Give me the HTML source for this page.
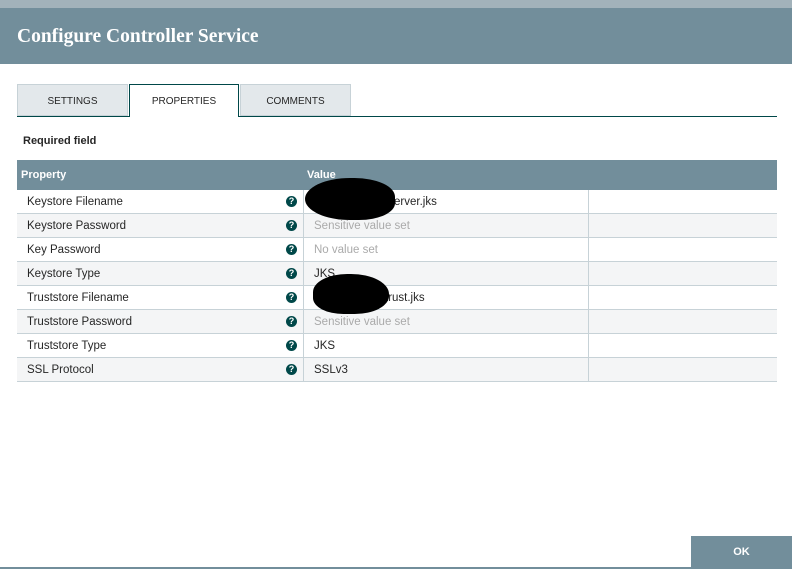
<!DOCTYPE html>
<html><head><style>
*{margin:0;padding:0;box-sizing:border-box}
body{width:792px;height:569px;background:#fff;position:relative;overflow:hidden;font-family:"Liberation Sans",sans-serif}
.top{position:absolute;left:0;top:0;width:792px;height:8px;background:#a2b2ba}
.hdr{position:absolute;left:0;top:8px;width:792px;height:56px;background:#728e9b;color:#fff;font-family:"Liberation Serif",serif;font-weight:bold;font-size:19.5px;padding:18px 0 0 17px}
.tab{position:absolute;top:84px;height:32px;border:1px solid #c7d2d7;background:#e3e8eb;font-size:10px;color:#262626;text-align:center;line-height:33px}
.tabline{position:absolute;left:17px;top:116px;width:760px;height:1px;background:#004849}
.req{position:absolute;left:23px;top:135px;font-size:11px;font-weight:bold;color:#262626}
.th{position:absolute;left:17px;top:160px;width:760px;height:30px;background:#728e9b;color:#fff;font-weight:bold;font-size:11px}
.row{position:absolute;left:17px;width:760px;height:24px;border-bottom:1px solid #c7d2d7;font-size:11.5px;color:#262626}
.c1{position:absolute;left:10px;top:6px}
.q{position:absolute;left:269px;top:6px;width:11px;height:11px;border-radius:50%;background:#004849;color:#fff;font-size:9px;font-weight:bold;text-align:center;line-height:11px}
.d1{position:absolute;left:286px;top:0;width:1px;height:24px;background:#c7d2d7}
.d2{position:absolute;left:571px;top:0;width:1px;height:24px;background:#c7d2d7}
.c2{position:absolute;left:297px;top:6px}
.g{color:#aaa}
.blob{position:absolute;background:#000;border-radius:50%}
.ok{position:absolute;left:691px;top:536px;width:101px;height:31px;background:#728e9b;color:#fff;font-weight:bold;font-size:11px;text-align:center;line-height:33px}
.bot{position:absolute;left:0;top:567px;width:792px;height:2px;background:#728e9b}
</style></head><body>
<div class="top"></div>
<div class="hdr">Configure Controller Service</div>
<div class="tab" style="left:17px;width:111px">SETTINGS</div>
<div class="tab" style="left:240px;width:111px">COMMENTS</div>
<div class="tabline"></div>
<div class="tab" style="left:129px;width:110px;background:#fff;border:1px solid #004849;border-bottom:none;height:33px;z-index:2">PROPERTIES</div>
<div class="req">Required field</div>
<div class="th"><span style="position:absolute;left:4px;top:9px">Property</span><span style="position:absolute;left:290px;top:9px">Value</span></div>
<div>
<div class="row" style="top:190px;background:#fff"><span class="c1">Keystore Filename</span><span class="q">?</span><span class="d1"></span><span class="c2" style="left:377px">erver.jks</span><span class="d2"></span></div>
<div class="row" style="top:214px;background:#f4f5f6"><span class="c1">Keystore Password</span><span class="q">?</span><span class="d1"></span><span class="c2 g">Sensitive value set</span><span class="d2"></span></div>
<div class="row" style="top:238px;background:#fff"><span class="c1">Key Password</span><span class="q">?</span><span class="d1"></span><span class="c2 g">No value set</span><span class="d2"></span></div>
<div class="row" style="top:262px;background:#f4f5f6"><span class="c1">Keystore Type</span><span class="q">?</span><span class="d1"></span><span class="c2">JKS</span><span class="d2"></span></div>
<div class="row" style="top:286px;background:#fff"><span class="c1">Truststore Filename</span><span class="q">?</span><span class="d1"></span><span class="c2" style="left:368px">trust.jks</span><span class="d2"></span></div>
<div class="row" style="top:310px;background:#f4f5f6"><span class="c1">Truststore Password</span><span class="q">?</span><span class="d1"></span><span class="c2 g">Sensitive value set</span><span class="d2"></span></div>
<div class="row" style="top:334px;background:#fff"><span class="c1">Truststore Type</span><span class="q">?</span><span class="d1"></span><span class="c2">JKS</span><span class="d2"></span></div>
<div class="row" style="top:358px;background:#f4f5f6"><span class="c1">SSL Protocol</span><span class="q">?</span><span class="d1"></span><span class="c2">SSLv3</span><span class="d2"></span></div>
</div>
<div class="blob" style="left:305px;top:178px;width:90px;height:42px;border-radius:50% 45% 40% 50%"></div>
<div class="blob" style="left:313px;top:274px;width:76px;height:40px;border-radius:45% 50% 45% 40%"></div>
<div class="ok">OK</div>
<div class="bot"></div>
</body></html>
